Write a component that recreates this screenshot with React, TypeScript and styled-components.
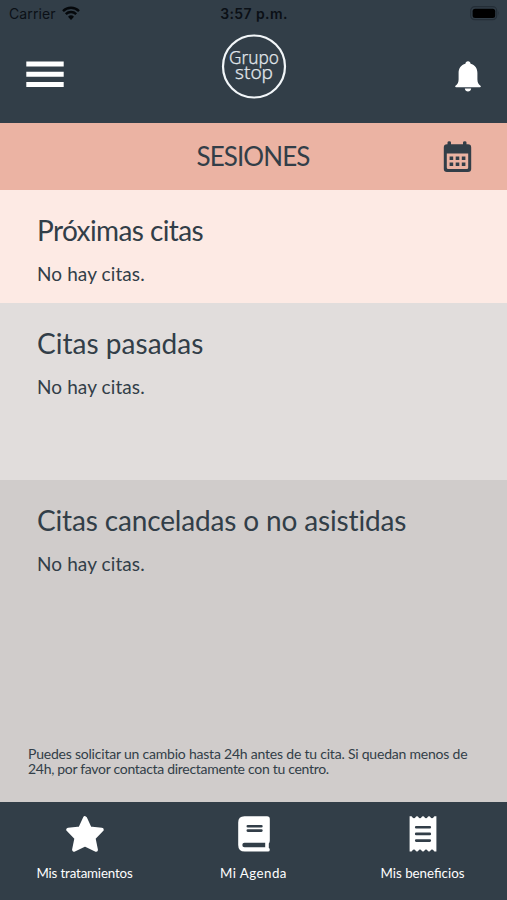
import React from "react";
import styled, { createGlobalStyle } from "styled-components";

const slate = "#323e48";

const GlobalStyle = createGlobalStyle`
  * { box-sizing: border-box; }
  body { margin: 0; background: ${slate}; }
  h1, h2, p { margin: 0; font-weight: 400; }
  button { border: 0; padding: 0; background: none; font: inherit; color: inherit; display: block; }
  svg { display: block; }
`;

const Screen = styled.main`
  width: 507px;
  height: 900px;
  display: flex;
  flex-direction: column;
  overflow: hidden;
  color: ${slate};
  font-family: Lato, "Open Sans", sans-serif;
`;

const Header = styled.header`
  height: 123px;
  background: ${slate};
  color: #fff;
`;

const StatusBar = styled.div`
  height: 27px;
  padding: 0 7px 0 9px;
  display: grid;
  grid-template-columns: 1fr auto 1fr;
  align-items: center;
  color: #0b1016;
  font-family: Inter, sans-serif;
  font-size: 14px;
  line-height: 27px;
`;

const Carrier = styled.div`
  display: flex;
  align-items: center;
  gap: 6px;
  letter-spacing: 0.1px;
`;

const Clock = styled.span`
  margin-right: 1px;
  font-weight: 600;
  letter-spacing: 0.4px;
`;

const Battery = styled.svg`
  justify-self: end;
`;

const NavBar = styled.div`
  height: 96px;
  padding: 0 26px;
  display: grid;
  grid-template-columns: 1fr auto 1fr;
`;

const MenuButton = styled.button`
  width: 38px;
  height: 26px;
  margin-top: 34px;
`;

const Logo = styled.svg`
  margin-top: 7px;
`;

const BellButton = styled.button`
  justify-self: end;
  width: 26px;
  height: 31px;
  margin-top: 34px;
`;

const TitleBar = styled.div`
  height: 67px;
  padding: 0 35px 0 34px;
  background: #ebb3a3;
  display: grid;
  grid-template-columns: 1fr auto 1fr;
  align-items: center;
`;

const Title = styled.h1`
  grid-column: 2;
  padding-bottom: 2px;
  font-size: 26px;
  line-height: 32px;
  letter-spacing: -0.9px;
`;

const CalendarButton = styled.button`
  justify-self: end;
`;

const Section = styled.section<{ $tone: string; $height: number }>`
  height: ${(p) => p.$height}px;
  background: ${(p) => p.$tone};
  padding: 22px 37px 0;
`;

const Heading = styled.h2<{ $tracking: number }>`
  font-size: 28px;
  line-height: 36px;
  white-space: nowrap;
  letter-spacing: ${(p) => p.$tracking}px;
`;

const Empty = styled.p`
  margin-top: 14px;
  font-size: 19px;
  line-height: 24px;
  letter-spacing: 0.1px;
`;

const LastSection = styled(Section)`
  display: flex;
  flex-direction: column;
`;

const Note = styled.p`
  margin: auto -20px 26px -9px;
  font-size: 14px;
  line-height: 15px;
`;

const NoteLine = styled.span<{ $tracking: number }>`
  display: block;
  white-space: nowrap;
  letter-spacing: ${(p) => p.$tracking}px;
`;

const TabBar = styled.nav`
  height: 98px;
  background: ${slate};
  color: #fff;
  display: grid;
  grid-template-columns: repeat(3, 1fr);
`;

const Tab = styled.button`
  display: flex;
  flex-direction: column;
  align-items: center;
  padding-top: 13px;
`;

const TabLabel = styled.span<{ $tracking: number }>`
  margin-top: 11px;
  font-size: 13.3px;
  line-height: 18px;
  white-space: nowrap;
  letter-spacing: ${(p) => p.$tracking}px;
`;

const WifiIcon = () => (
  <svg width="18" height="15" viewBox="0 0 18 15" fill="none" stroke="#05080b" strokeWidth="2.4">
    <path d="M1 5.1a11.4 11.4 0 0 1 16 0M3.8 8.2a7.4 7.4 0 0 1 10.4 0" />
    <path d="M6 10.8a4.3 4.3 0 0 1 6 0L9 14z" fill="#05080b" stroke="none" />
  </svg>
);

const MenuIcon = () => (
  <svg width="38" height="26" viewBox="0 0 38 26" fill="#fff">
    <path d="M.3.6h37.4v5H.3zM.3 10.7h37.4v5H.3zM.3 21h37.4v5H.3z" />
  </svg>
);

const BellIcon = () => (
  <svg width="26" height="31" viewBox="0 0 26 31" fill="#fff">
    <path d="M13 .2c1.5 0 2.5 1 2.6 2.6 4.4 1.1 6.8 4.6 6.8 9.2v6.3c0 3 .8 4.8 3.1 6.5.7.7.3 1.5-.6 1.5H1.1c-.9 0-1.3-.8-.6-1.5 2.3-1.7 3.1-3.5 3.1-6.5V12c0-4.6 2.4-8.1 6.8-9.2C10.5 1.2 11.5.2 13 .2zM9.8 27.4h6.4c-.2 1.9-1.5 3-3.2 3s-3-1.1-3.2-3z" />
  </svg>
);

const CalendarIcon = () => (
  <svg width="29" height="31" viewBox="0 0 29 31" fill={slate}>
    <path
      fillRule="evenodd"
      d="M4.5 1.5q0-1.3 1.8-1.3T8 1.500V3.2H20V1.5q0-1.3 1.8-1.3t1.7 1.3V3.2H25q3.2 0 3.2 3.2V28q0 3-3.2 3H4Q.8 31 .8 28V6.4Q.8 3.2 4 3.2h.5zM3.8 12.400V26.5q0 1.5 1.5 1.5H23.7q1.5 0 1.5-1.5V12.4z"
    />
    <path d="M6.600 15.500h3.600v3.500H6.600zM12.700 15.500h3.600v3.500h-3.600zM18.800 15.500h3.600v3.500h-3.600zM6.600 21.600h3.600v3.500H6.600zM12.700 21.600h3.600v3.500h-3.600zM18.800 21.600h3.600v3.500h-3.600z" />
  </svg>
);

const StarIcon = () => (
  <svg width="38" height="38" viewBox="0 0 38 38" fill="#fff" stroke="#fff" strokeWidth="4" strokeLinejoin="round">
    <path d="M19 3.200l4.700 10.200 12 1.300-8.200 8.300 2.400 11.700L19 29.500 8.100 34.700l2.400-11.700-8.200-8.300 12-1.300z" />
  </svg>
);

const AgendaIcon = () => (
  <svg width="34" height="38" viewBox="0 0 34 38">
    <path fill="#fff" d="M7.500 1.200H30q2.800 0 2.800 2.800v21.700q0 1.800-1 2.800v4.600q1 .3 1 1.600 0 1.900-1.800 1.900H7.800Q1.200 36.600 1.200 30V7.500Q1.200 1.200 7.500 1.200z" />
    <path d="M10.800 11.200H24.400M10.800 15.600H24.400" stroke={slate} strokeWidth="2.600" strokeLinecap="round" />
    <path d="M7.500 27.800H28.200v4.400H7.500q-2.200 0-2.200-2.200t2.200-2.200z" fill={slate} />
  </svg>
);

const ReceiptIcon = () => (
  <svg width="28" height="38" viewBox="0 0 28 38">
    <path fill="#fff" d="M.6 1.200h1.700c.8 0 1.200 2 2.700 2s1.500-2 3-2 1.500 2 3 2 1.500-2 3-2 1.500 2 3 2 1.500-2 3-2 1.500 2 3 2 1.900-2 2.700-2h1.700V36.500h-1.700c-.8 0-1.200-2-2.700-2s-1.500 2-3 2-1.500-2-3-2-1.500 2-3 2-1.500-2-3-2-1.500 2-3 2-1.500-2-3-2-1.900 2-2.700 2H.6z" />
    <path d="M7.200 12.200h13.600M7.200 18.900h13.600M7.200 25.600h13.600" stroke={slate} strokeWidth="2.600" strokeLinecap="round" />
  </svg>
);

const tabs = [
  { label: "Mis tratamientos", tracking: -0.15, Icon: StarIcon },
  { label: "Mi Agenda", tracking: 0.45, Icon: AgendaIcon },
  { label: "Mis beneficios", tracking: 0, Icon: ReceiptIcon },
];

export default function App() {
  return (
    <Screen>
      <GlobalStyle />
      <Header>
        <StatusBar>
          <Carrier>
            Carrier
            <WifiIcon />
          </Carrier>
          <Clock>3:57 p.m.</Clock>
          <Battery width="30" height="15" viewBox="0 0 30 15">
            <rect x=".7" y=".7" width="26" height="13" rx="4" fill="none" stroke="#242e37" strokeWidth="1.2" />
            <rect x="2.6" y="2.7" width="22.6" height="9.2" rx="2.5" fill="#000" />
            <path d="M28 5q1.5 2.3 0 4.6z" fill="#242e37" />
          </Battery>
        </StatusBar>
        <NavBar>
          <MenuButton aria-label="Menú">
            <MenuIcon />
          </MenuButton>
          <Logo width="66" height="66" viewBox="0 0 66 66">
            <circle cx="33" cy="32.5" r="31" fill="none" stroke="#f2f6f9" strokeWidth="2.2" />
            <g fill="#e1e7ec" stroke="#e1e7ec" strokeWidth=".25" fontFamily="Noto Sans, sans-serif" fontWeight="300" fontSize="18.5" textAnchor="middle">
              <text x="33" y="30.2" textLength="50" lengthAdjust="spacingAndGlyphs">Grupo</text>
              <text x="33" y="45.3" textLength="38" lengthAdjust="spacingAndGlyphs">stop</text>
            </g>
          </Logo>
          <BellButton aria-label="Notificaciones">
            <BellIcon />
          </BellButton>
        </NavBar>
      </Header>
      <TitleBar>
        <Title>SESIONES</Title>
        <CalendarButton aria-label="Calendario">
          <CalendarIcon />
        </CalendarButton>
      </TitleBar>
      <Section $tone="#fdeae4" $height={113}>
        <Heading $tracking={-0.6}>Próximas citas</Heading>
        <Empty>No hay citas.</Empty>
      </Section>
      <Section $tone="#e1dddc" $height={177}>
        <Heading $tracking={0.03}>Citas pasadas</Heading>
        <Empty>No hay citas.</Empty>
      </Section>
      <LastSection $tone="#d0cccb" $height={322}>
        <Heading $tracking={-0.15}>Citas canceladas o no asistidas</Heading>
        <Empty>No hay citas.</Empty>
        <Note>
          <NoteLine $tracking={-0.21}>Puedes solicitar un cambio hasta 24h antes de tu cita. Si quedan menos de</NoteLine>
          <NoteLine $tracking={-0.3}>24h, por favor contacta directamente con tu centro.</NoteLine>
        </Note>
      </LastSection>
      <TabBar>
        {tabs.map(({ label, tracking, Icon }) => (
          <Tab key={label}>
            <Icon />
            <TabLabel $tracking={tracking}>{label}</TabLabel>
          </Tab>
        ))}
      </TabBar>
    </Screen>
  );
}
